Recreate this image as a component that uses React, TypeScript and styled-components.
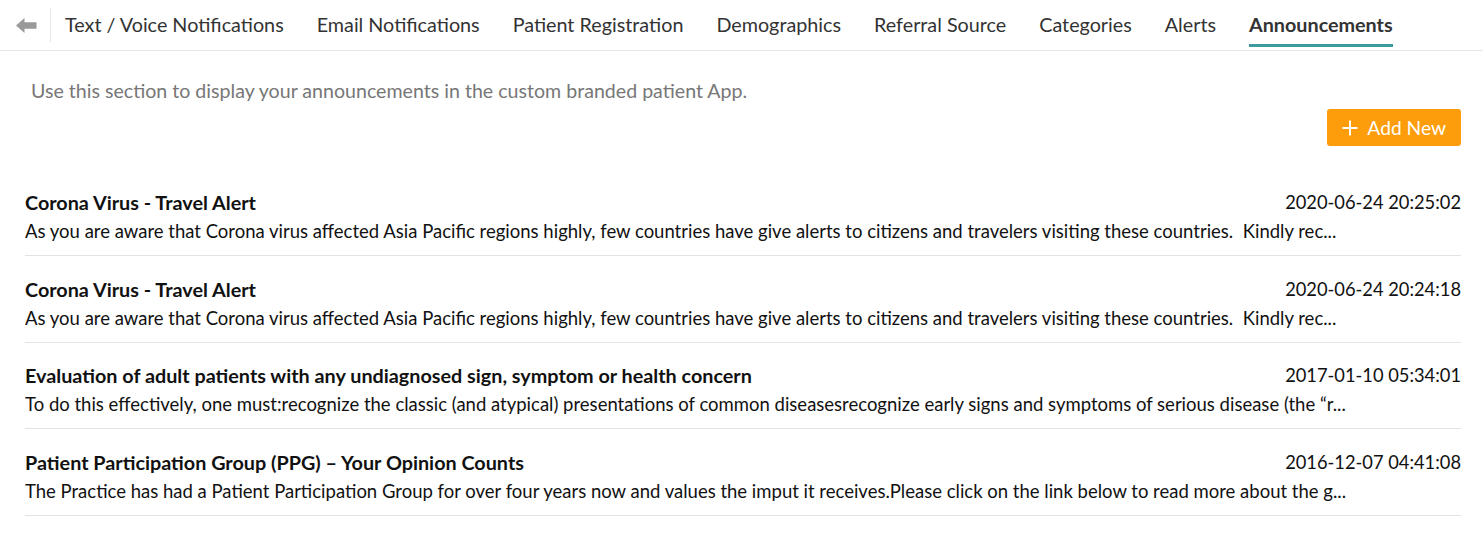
import React from 'react'
import styled, { createGlobalStyle } from 'styled-components'

const GlobalStyle = createGlobalStyle`
  html, body {
    margin: 0;
    padding: 0;
    background: #ffffff;
  }
  body {
    font-family: Lato, 'Open Sans', sans-serif;
    color: #333333;
  }
`

const tabs = [
  'Text / Voice Notifications',
  'Email Notifications',
  'Patient Registration',
  'Demographics',
  'Referral Source',
  'Categories',
  'Alerts',
  'Announcements'
]

const announcements = [
  {
    id: 1,
    title: 'Corona Virus - Travel Alert',
    date: '2020-06-24 20:25:02',
    body:
      'As you are aware that Corona virus affected Asia Pacific regions highly, few countries have give alerts to citizens and travelers visiting these countries.\u00a0 Kindly rec...'
  },
  {
    id: 2,
    title: 'Corona Virus - Travel Alert',
    date: '2020-06-24 20:24:18',
    body:
      'As you are aware that Corona virus affected Asia Pacific regions highly, few countries have give alerts to citizens and travelers visiting these countries.\u00a0 Kindly rec...'
  },
  {
    id: 3,
    title: 'Evaluation of adult patients with any undiagnosed sign, symptom or health concern',
    date: '2017-01-10 05:34:01',
    body:
      'To do this effectively, one must:recognize the classic (and atypical) presentations of common diseasesrecognize early signs and symptoms of serious disease (the \u201cr...'
  },
  {
    id: 4,
    title: 'Patient Participation Group (PPG) \u2013 Your Opinion Counts',
    date: '2016-12-07 04:41:08',
    body:
      'The Practice has had a Patient Participation Group for over four years now and values the imput it receives.Please click on the link below to read more about the g...'
  }
]

const BackArrow = () => (
  <svg width='21' height='15' viewBox='0 0 21 15'>
    <path d='M0 7.5 L8.5 0 L8.5 4.2 L20.5 4.2 L20.5 10.8 L8.5 10.8 L8.5 15 Z' fill='#9a9a9a' />
  </svg>
)

const PlusIcon = () => (
  <svg width='16' height='16' viewBox='0 0 16 16'>
    <path d='M8 0.5 V15.5 M0.5 8 H15.5' stroke='#fff' strokeWidth='2' />
  </svg>
)

const App = () => {
  const active = 'Announcements'
  return (
    <>
      <GlobalStyle />
      <Page>
        <TabBar>
          <BackButton>
            <BackArrow />
          </BackButton>
          <Tabs>
            {tabs.map((t) => (
              <Tab key={t} active={t === active}>
                {t}
              </Tab>
            ))}
          </Tabs>
        </TabBar>

        <Content>
          <Intro>Use this section to display your announcements in the custom branded patient App.</Intro>
          <Toolbar>
            <AddButton type='button'>
              <PlusIcon />
              Add New
            </AddButton>
          </Toolbar>

          <List>
            {announcements.map((a) => (
              <Item key={a.id}>
                <ItemHeader>
                  <ItemTitle>{a.title}</ItemTitle>
                  <ItemDate>{a.date}</ItemDate>
                </ItemHeader>
                <ItemBody>{a.body}</ItemBody>
              </Item>
            ))}
          </List>
        </Content>
      </Page>
    </>
  )
}

export default App

const Page = styled.div`
  width: 1483px;
  min-height: 546px;
  background: #fff;
`

const TabBar = styled.div`
  display: flex;
  align-items: stretch;
  height: 50px;
  border-bottom: 1px solid #e6e6e6;
`

const BackButton = styled.div`
  width: 51px;
  display: flex;
  align-items: center;
  justify-content: center;
  padding-left: 3px;
  border-right: 1px solid #e6e6e6;
  margin: 8px 0;
  box-sizing: border-box;
`

const Tabs = styled.div`
  display: flex;
  align-items: stretch;
  gap: 33px;
  padding-left: 14px;
`

const Tab = styled.div<{ active?: boolean }>`
  display: flex;
  align-items: center;
  font-size: 19.75px;
  color: #333;
  font-weight: ${(p) => (p.active ? 700 : 400)};
  border-bottom: 3px solid ${(p) => (p.active ? '#3d9a9e' : 'transparent')};
  padding-top: 5px;
  margin-bottom: 3px;
  white-space: nowrap;
`

const Content = styled.div`
  padding: 29px 22px 0 25px;
`

const Intro = styled.div`
  font-size: 19.6px;
  line-height: 22px;
  color: #777;
  padding-left: 6px;
`

const Toolbar = styled.div`
  display: flex;
  justify-content: flex-end;
  margin-top: 7px;
`

const AddButton = styled.button`
  display: flex;
  align-items: center;
  gap: 9px;
  height: 37px;
  padding: 0 15px 0 15px;
  border: none;
  border-radius: 3px;
  background: #fd9d0c;
  color: #fff;
  font-family: Lato, sans-serif;
  font-size: 19.2px;
  cursor: pointer;
`

const List = styled.div`
  display: flex;
  flex-direction: column;
  margin-top: 24px;
`

const Item = styled.div`
  padding: 21.4px 0 13px;
  border-bottom: 1px solid #e3e3e3;
`

const ItemHeader = styled.div`
  display: flex;
  justify-content: space-between;
  align-items: center;
`

const ItemTitle = styled.div`
  font-size: 19.8px;
  line-height: 22px;
  font-weight: 700;
  color: #111;
`

const ItemDate = styled.div`
  font-size: 18.3px;
  line-height: 22px;
  color: #111;
`

const ItemBody = styled.div`
  margin-top: 7px;
  font-size: 18.5px;
  line-height: 22px;
  color: #111;
  white-space: nowrap;
  overflow: hidden;
  text-overflow: ellipsis;
  max-width: 1360px;
`
